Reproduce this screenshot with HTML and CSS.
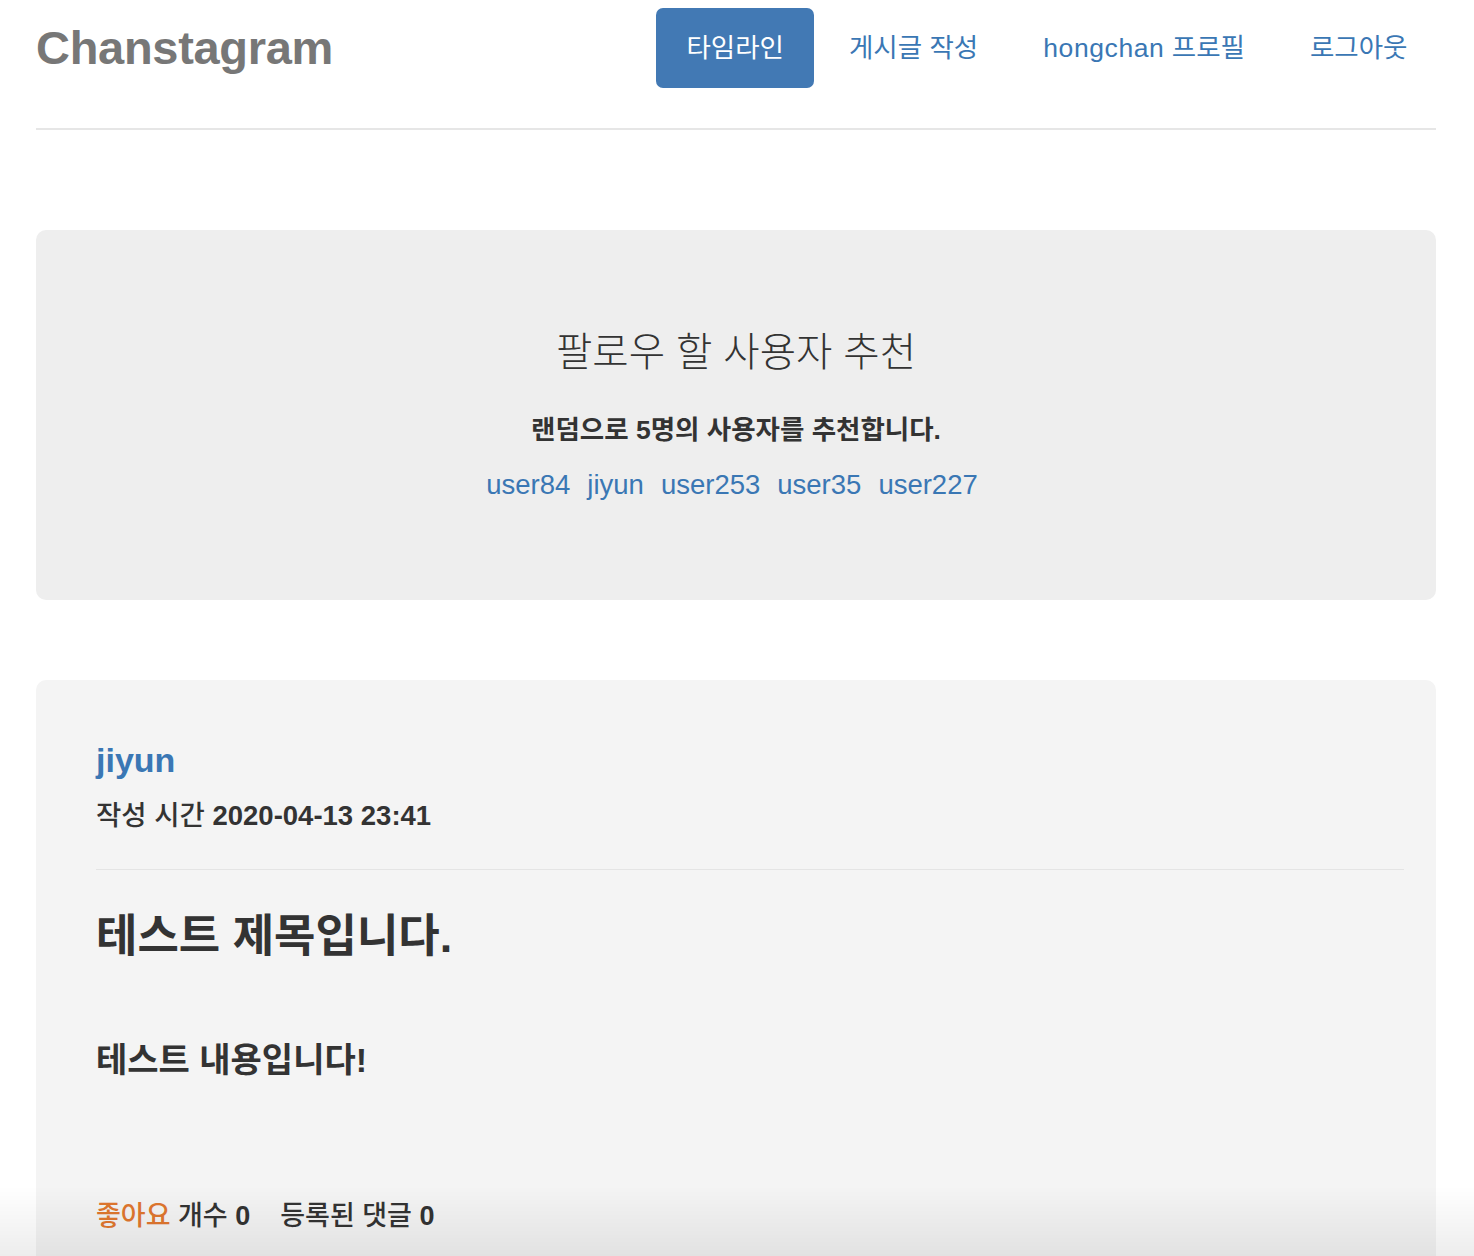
FILE: index.html
```html
<!DOCTYPE html>
<html lang="ko">
<head>
<meta charset="utf-8">
<title>Chanstagram</title>
<link rel="stylesheet" href="styles.css">
</head>
<body>
<div class="container">
  <header class="header">
    <div class="brand">Chanstagram</div>
    <nav class="nav">
      <a class="pill active" href="#">타임라인</a>
      <a class="pill" href="#">게시글 작성</a>
      <a class="pill" href="#"><span class="latin">hongchan</span> 프로필</a>
      <a class="pill" href="#">로그아웃</a>
    </nav>
  </header>

  <section class="jumbotron">
    <h2 class="jt-title">팔로우 할 사용자 추천</h2>
    <p class="jt-sub">랜덤으로 5명의 사용자를 추천합니다.</p>
    <div class="jt-links">
      <a href="#">user84</a>
      <a href="#">jiyun</a>
      <a href="#">user253</a>
      <a href="#">user35</a>
      <a href="#">user227</a>
    </div>
  </section>

  <article class="post">
    <a class="post-user" href="#">jiyun</a>
    <div class="post-meta"><span class="ko">작성 시간</span> 2020-04-13 23:41</div>
    <hr class="post-rule">
    <h3 class="post-title">테스트 제목입니다.</h3>
    <p class="post-body">테스트 내용입니다!</p>
    <div class="post-foot"><span class="like">좋아요</span> 개수 <strong>0</strong><span class="gap"></span>등록된 댓글 <strong>0</strong></div>
  </article>
</div>
<div class="shade"></div>
</body>
</html>
```

FILE: styles.css
```css
* { box-sizing: border-box; }
html, body { margin: 0; padding: 0; background: #fff; }
body {
  font-family: "Liberation Sans", "Noto Sans CJK KR", sans-serif;
  color: #333;
  overflow: hidden;
  height: 1256px;
}
a { color: #3a77b4; text-decoration: none; }

.container {
  padding: 0 38px 0 36px;
}

.header {
  display: flex;
  justify-content: space-between;
  align-items: center;
  padding: 8px 0 40px;
  border-bottom: 2px solid #e6e6e6;
}
.brand {
  font-size: 47px;
  font-weight: 700;
  color: #777;
  letter-spacing: -0.3px;
  line-height: 80px;
}
.nav {
  display: flex;
  gap: 4px;
  margin-right: -2px;
}
.pill {
  display: block;
  height: 80px;
  line-height: 80px;
  padding: 0 30.5px;
  font-size: 26.5px;
  border-radius: 7px;
  color: #3a77b4;
}
.pill .latin { letter-spacing: 0.6px; }
.pill.active {
  background: #4279b4;
  color: #fff;
}

.jumbotron {
  margin-top: 100px;
  background: #eee;
  border-radius: 10px;
  padding: 97px 20px;
  text-align: center;
}
.jt-title {
  margin: 0;
  font-size: 39.5px;
  font-weight: 300;
  line-height: 50px;
  color: #333;
}
.jt-sub {
  margin: 35px 0 0;
  font-size: 26.5px;
  font-weight: 700;
  line-height: 36px;
}
.jt-links {
  margin-top: 19px;
  display: flex;
  justify-content: center;
  gap: 17px;
  font-size: 27.5px;
  line-height: 36px;
  padding-right: 8px;
}

.post {
  margin-top: 80px;
  background: #f4f4f4;
  border-radius: 10px;
  padding: 58px 32px 80px 60px;
}
.post-user {
  display: block;
  font-size: 34px;
  font-weight: 700;
  line-height: 44px;
}
.post-meta {
  margin-top: 16px;
  font-size: 27.5px;
  font-weight: 700;
  line-height: 36px;
}
.post-meta .ko { font-weight: 500; }
.post-rule {
  margin: 35px 0 0;
  border: 0;
  border-top: 1px solid #e4e4e4;
}
.post-title {
  margin: 39px 0 0;
  font-size: 45px;
  font-weight: 600;
  line-height: 56px;
}
.post-body {
  margin: 73px 0 0;
  font-size: 34px;
  font-weight: 600;
  line-height: 44px;
}
.post-foot {
  margin-top: 116px;
  font-size: 27px;
  font-weight: 500;
  line-height: 36px;
}
.post-foot strong { font-weight: 700; }
.like { color: #e0772f; }
.gap { display: inline-block; width: 30px; }

.shade {
  position: fixed;
  left: 0;
  right: 0;
  bottom: 0;
  height: 70px;
  background: linear-gradient(to bottom, rgba(0,0,0,0), rgba(0,0,0,0.07));
  pointer-events: none;
}
```
